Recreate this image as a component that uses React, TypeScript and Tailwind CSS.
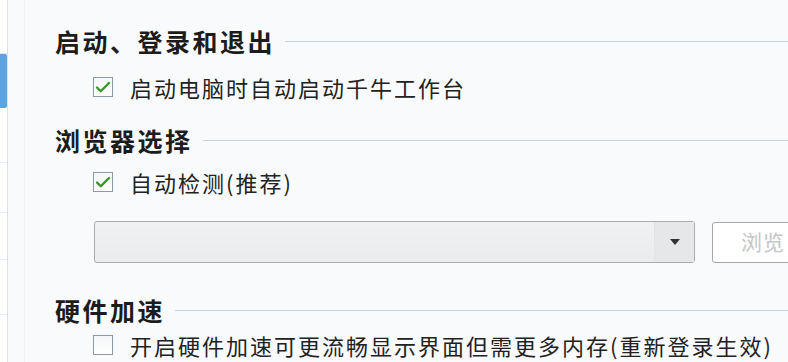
import { Check } from 'lucide-react'

const font = { fontFamily: '"Noto Sans CJK SC", "Noto Sans", sans-serif' }

function Heading({ text }: { text: string }) {
  return (
    <div className="flex items-center h-[30px]">
      <span className="text-[25px] font-bold tracking-[2.5px] text-[#1c1c1c] leading-none">{text}</span>
      <div className="flex-1 h-px bg-[#c9d3dc] ml-[10px]" />
    </div>
  )
}

function CheckRow({ text, checked }: { text: string; checked: boolean }) {
  return (
    <div className="flex items-center h-[30px] pl-[38px]">
      <div className="w-[20px] h-[20px] border border-[#8c9aa8] bg-gradient-to-b from-[#f4f6f8] to-white flex items-center justify-center shrink-0">
        {checked && <Check className="w-[19px] h-[19px] text-[#3a9626]" strokeWidth={3.2} />}
      </div>
      <span className="ml-[17px] text-[22px] tracking-[2px] text-[#222] leading-none whitespace-nowrap">{text}</span>
    </div>
  )
}

export default function App() {
  return (
    <div className="w-[788px] h-[362px] flex overflow-hidden bg-[#f9fafc]" style={font}>
      {/* left list */}
      <div className="w-[8px] shrink-0 bg-white border-r border-[#dcdfe3] flex flex-col">
        <div className="h-[54px] border-b border-[#e3e6ea]" />
        <div className="h-[54px] bg-[#5da3e2] rounded-r-[2px]" />
        <div className="h-[55px] border-b border-[#eceff2]" />
        <div className="h-[50px] border-b border-[#eceff2]" />
        <div className="h-[47px] border-b border-[#eceff2]" />
        <div className="h-[55px] border-b border-[#eceff2]" />
      </div>
      <div className="w-[17px] shrink-0 border-r border-[#eef0f3]" />

      {/* settings */}
      <div className="flex-1 pl-[30px] pt-[26px] flex flex-col">
        <Heading text="启动、登录和退出" />
        <div className="mt-[16px]">
          <CheckRow checked text="启动电脑时自动启动千牛工作台" />
        </div>

        <div className="mt-[23px]">
          <Heading text="浏览器选择" />
        </div>
        <div className="mt-[12px]">
          <CheckRow checked text="自动检测(推荐)" />
        </div>

        <div className="mt-[24px] flex items-center pl-[39px]">
          <div className="w-[601px] h-[42px] shrink-0 flex rounded-[3px] border border-[#a9abae] bg-gradient-to-b from-[#f0f1f3] to-[#eaebed]">
            <div className="flex-1" />
            <div className="w-[40px] border-l border-[#e2e3e5] bg-[#e6e7e9] flex items-center justify-center">
              <svg width="12" height="8" viewBox="0 0 12 8">
                <path d="M1 1h10L6 7z" fill="#333" />
              </svg>
            </div>
          </div>
          <div className="ml-[17px] w-[90px] h-[41px] shrink-0 rounded-[3px] border border-[#a5a7aa] bg-white flex items-center pl-[28px]">
            <span className="text-[21px] text-[#c4c6c9] tracking-[1px] whitespace-nowrap">浏览</span>
          </div>
        </div>

        <div className="mt-[32px]">
          <Heading text="硬件加速" />
        </div>
        <div className="mt-[5px]">
          <CheckRow checked={false} text="开启硬件加速可更流畅显示界面但需更多内存(重新登录生效)" />
        </div>
      </div>
    </div>
  )
}
